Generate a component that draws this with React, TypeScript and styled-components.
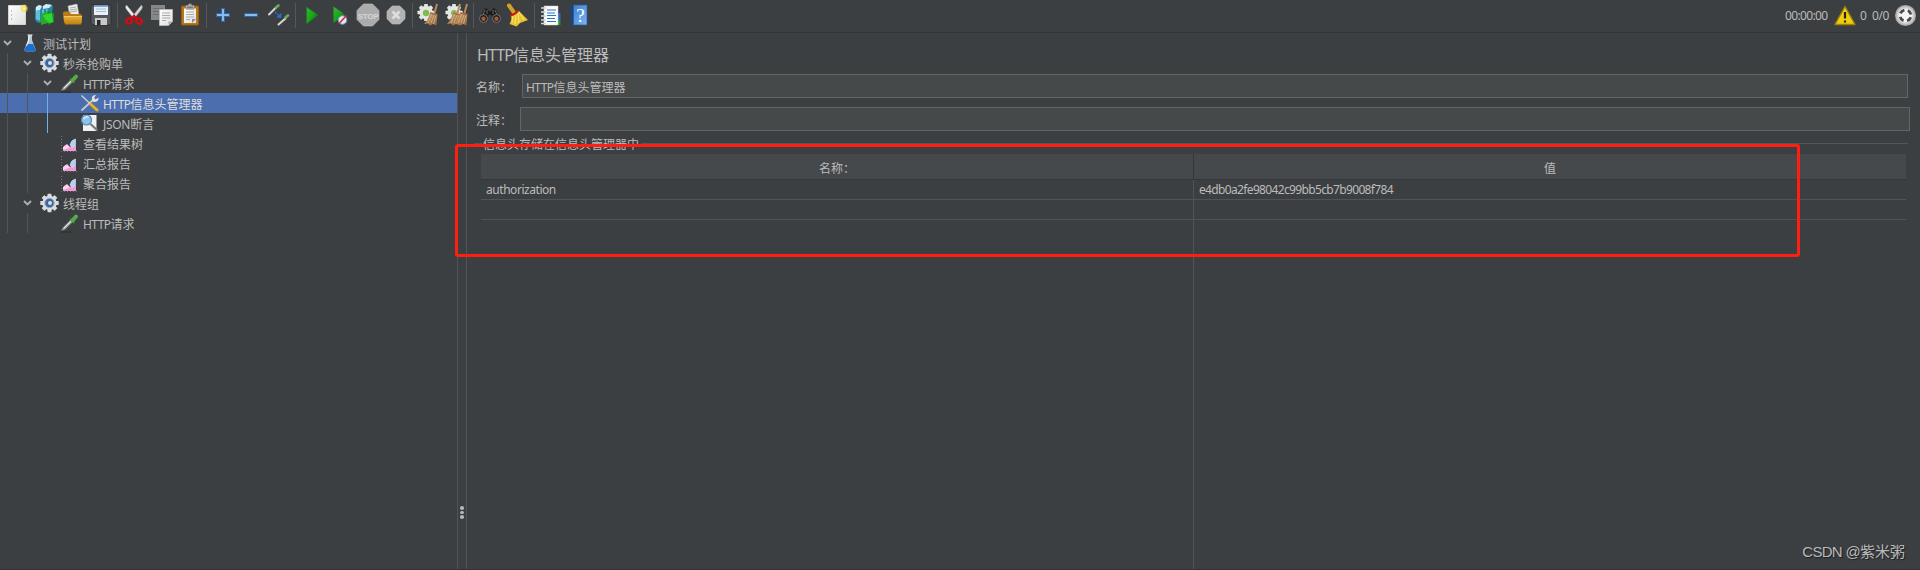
import React from 'react';
import styled, { createGlobalStyle, css } from 'styled-components';

const Global = createGlobalStyle`
  * { box-sizing: border-box; }
  body { margin: 0; background: #3c3f41; overflow: hidden; }
`;

const Window = styled.div`
  position: relative;
  display: flex;
  flex-direction: column;
  width: 1920px;
  height: 570px;
  background: #3c3f41;
  color: #bbbbbb;
  font: 12px/20px "Noto Sans", "Noto Sans CJK SC", sans-serif;
  border-bottom: 1px solid #372f33;
`;

const Latin = styled.span<{ $tight?: number }>`
  letter-spacing: ${(p) => p.$tight ?? -0.55}px;
`;

/* toolbar */
const Toolbar = styled.header`
  display: flex;
  align-items: flex-start;
  flex: none;
  height: 33px;
  padding: 1px 3px 0;
  border-bottom: 1px solid #323436;
`;
const ToolButton = styled.div`
  width: 28px;
  height: 28px;
  padding: 2px;
  svg { display: block; overflow: visible; }
`;
const Separator = styled.div`
  width: 5px;
  height: 25px;
  margin-top: 2px;
  background: linear-gradient(#55585a, #55585a) 2px 0 / 1px 100% no-repeat;
`;
const Status = styled.div`
  display: flex;
  align-items: center;
  height: 28px;
  margin-left: auto;
  padding-top: 1px;
  svg { display: block; }
`;
const Clock = styled.span`
  width: 49px;
  letter-spacing: -0.65px;
`;
const Count = styled.span<{ $w: number }>`
  width: ${(p) => p.$w}px;
  letter-spacing: -0.4px;
`;

/* tree */
const Body = styled.div`
  display: flex;
  flex: 1;
  min-height: 0;
`;
const Tree = styled.nav`
  width: 457px;
  flex: none;
`;
const TreeRow = styled.div<{ $selected?: boolean }>`
  display: flex;
  height: 20px;
  background: ${(p) => (p.$selected ? '#4b6eaf' : 'transparent')};
  color: ${(p) => (p.$selected ? '#dddddd' : '#bbbbbb')};
`;
const Guide = styled.span<{ $active?: boolean }>`
  width: 20px;
  background: linear-gradient(
      ${(p) => (p.$active ? '#6fb1ec, #6fb1ec' : '#525557, #525557')}
    ) 7px 0 / 1px 100% no-repeat;
`;
const Twisty = styled.span`
  width: 20px;
  svg { display: block; }
`;
const NodeIcon = styled.span`
  width: 20px;
  margin-right: 3px;
  svg { display: block; }
`;
const NodeText = styled.span`
  line-height: 23px;
  white-space: nowrap;
`;
const Splitter = styled.div`
  display: flex;
  flex-direction: column;
  align-items: center;
  width: 10px;
  flex: none;
  padding: 473px 0 0 0;
  gap: 1px;
  border: solid #515456;
  border-width: 0 1px;
`;
const Dot = styled.i`
  width: 4px;
  height: 3.5px;
  border-radius: 50%;
  background: #b4b6b7;
`;

/* editor */
const Editor = styled.main`
  display: flex;
  flex-direction: column;
  flex: 1;
  min-width: 0;
  padding: 10px 10px 0 7px;
`;
const Title = styled.h1`
  margin: 0 0 7px 3px;
  height: 24px;
  font-size: 16px;
  font-weight: 400;
  line-height: 25px;
`;
const Field = styled.label<{ $offset: number; $end: number }>`
  display: flex;
  height: 24px;
  margin: 0 ${(p) => p.$end}px 9px 2px;
  line-height: 28px;
  > span { width: ${(p) => p.$offset}px; }
`;
const Input = styled.div`
  flex: 1;
  height: 24px;
  padding-left: 3px;
  border: 1px solid #646665;
  background: #45494a;
  line-height: 25px;
`;
const GroupTitle = styled.div`
  display: flex;
  align-items: center;
  height: 14px;
  margin: -3px 2px 0 0;
  line-height: 14px;
  > span { padding-top: 2px; }
  &::before, &::after {
    content: "";
    height: 1px;
    background: #555658;
    margin-top: -1px;
  }
  &::before { width: 8px; margin-right: 1px; }
  &::after { flex: 1; margin-left: 2px; }
`;
const Table = styled.div`
  display: flex;
  flex-direction: column;
  flex: 1;
  margin: 3px 4px 0 7px;
`;
const cell = css`
  &:first-child { width: 713px; flex: none; border-right: 1px solid #515456; }
  &:last-child { flex: 1; }
`;
const HeadRow = styled.div`
  display: flex;
  height: 26px;
  background: #45494b;
  border-bottom: 1px solid #343739;
`;
const HeadCell = styled.div`
  ${cell}
  text-align: center;
  line-height: 30px;
  &:first-child { border-right-color: #343739; }
`;
const Row = styled.div<{ $fill?: boolean }>`
  display: flex;
  ${(p) => (p.$fill ? 'flex: 1;' : 'height: 20px; border-bottom: 1px solid #515456;')}
`;
const Cell = styled.div`
  ${cell}
  padding-left: 5px;
  line-height: 20px;
`;

/* overlays */
const Highlight = styled.div`
  position: absolute;
  left: 455px;
  top: 144px;
  width: 1345px;
  height: 113px;
  border: 3px solid #ff1e10;
  border-radius: 3px;
`;
const Watermark = styled.div`
  position: absolute;
  right: 15px;
  bottom: 6px;
  font: 15px/22px "Liberation Sans", "Noto Sans CJK SC", sans-serif;
  color: #b9babb;
  text-shadow: 1px 1px 1px #1c1d1e;
  white-space: nowrap;
`;

const Svg = ({ s = 24, children }: { s?: number; children: React.ReactNode }) => (
  <svg width={s} height={s} viewBox={`0 0 ${s} ${s}`} fill="none">{children}</svg>
);

const Gradients = () => (
  <svg width="0" height="0" style={{ position: 'absolute' }}>
    <defs>
      <linearGradient id="green" x1="0" y1="0" x2="1" y2="1"><stop stopColor="#37b437" /><stop offset=".5" stopColor="#19a519" /><stop offset="1" stopColor="#075c07" /></linearGradient>
      <linearGradient id="gold" x1="0" y1="0" x2="0" y2="1"><stop stopColor="#e9ad35" /><stop offset="1" stopColor="#bd7d10" /></linearGradient>
      <linearGradient id="blue" x1="0" y1="0" x2="1" y2="1"><stop stopColor="#3f7fd0" /><stop offset="1" stopColor="#79b5f5" /></linearGradient>
      <linearGradient id="paper" x1="0" y1="0" x2="1" y2="1"><stop stopColor="#ffffff" /><stop offset="1" stopColor="#dedede" /></linearGradient>
      <radialGradient id="sun"><stop stopColor="#fffbd0" /><stop offset=".45" stopColor="#f3df58" /><stop offset="1" stopColor="#f3df58" stopOpacity="0" /></radialGradient>
      <radialGradient id="ball"><stop offset=".55" stopColor="#f5f5f5" /><stop offset="1" stopColor="#a0a0a0" /></radialGradient>
      <linearGradient id="broom" x1="0" y1="0" x2="1" y2="1"><stop stopColor="#d2a675" /><stop offset="1" stopColor="#8f6237" /></linearGradient>
    </defs>
  </svg>
);

const teeth = [0, 45, 90, 135, 180, 225, 270, 315];
const Gear = ({ x, y, r, color }: { x: number; y: number; r: number; color: string }) => (
  <g transform={`translate(${x} ${y})`} fill={color}>
    {teeth.map((a) => <rect key={a} x={-r * 0.22} y={-r} width={r * 0.44} height={r} rx=".6" transform={`rotate(${a})`} />)}
    <circle r={r * 0.78} />
  </g>
);
const Brush = ({ x }: { x: number }) => (
  <g transform={`translate(${x} 0)`}>
    <path d="M19 1 16.500 10" stroke="#b98a5c" strokeWidth="2" />
    <path d="M12 9 19.500 11 18.500 22.500 15 21 12 22.500 10 20.500 6 21Q11 16 12 9Z" fill="url(#broom)" />
    <path d="M14 11 10 20M16 12 13 20M18 12 15.500 21" stroke="#e1bd91" strokeWidth=".7" />
    <path d="m12.500 10 6 2" stroke="#9b4a32" strokeWidth=".8" />
  </g>
);

const tools: Record<string, React.ReactNode> = {
  fresh: <><path d="M3.500 2.500h17v19h-17z" fill="url(#paper)" stroke="#d5d5d0" /><path d="M6 8h.8M6 12h.8M6 16h.8" stroke="#777" /><circle cx="19" cy="5.500" r="4.500" fill="url(#sun)" /></>,
  templates: <>
    <path d="m2 5 3-3 5 1 1 16-6 1L2 17Z" fill="#2a86ab" /><path d="m10 3 7-2 3 2-1 7-8 3Z" fill="#2586a8" />
    <path d="m3 4 3-2 3 1-2 4-4 1Zm7-1 3-2 6 1-3 3-6 1Z" fill="#d5edf2" /><path d="m3 8 4-1v11l-4-2Zm6-1 2-1v5H9Zm4-1 1.500-.5v4H13Z" fill="#65bcda" />
    <path d="m8 11 7-3v12l-7 2Z" fill="#26ac25" /><path d="m15 8 6 2v9l-6 3Z" fill="#139413" /><path d="m10 12 9-2 1 9-4 1-4-4Z" fill="#35d436" />
  </>,
  open: <>
    <path d="m7 3 9-2 2 11-9 2Z" fill="#ededed" stroke="#bbb" strokeWidth=".5" /><path d="m9 5 6-1M9 7l7-1M9 9l7-1" stroke="#999" strokeWidth=".8" />
    <path d="M2 10q0-1.500 1.500-1.500h5L10 11h9q2 0 2 2v7H3Z" fill="#b87c16" /><path d="M2.500 13.500h18.500l-1 8H4Z" fill="url(#gold)" /><path d="M3 13.500h18" stroke="#efc666" />
  </>,
  save: <>
    <path d="M3 2h18l1 1v18q0 1-1 1H4l-2-2V3q0-1 1-1Z" fill="#53585c" stroke="#25292b" strokeWidth=".7" /><path d="M5 2.500h14V12H5z" fill="#e8f2fa" /><path d="M5 3h14" stroke="#6494c6" strokeWidth="1.600" /><path d="M7 6h10M7 8.500h10" stroke="#a9bdc9" />
    <path d="M6 15h12v7H6z" fill="#c9c9c6" /><path d="M8 17h3.500v5H8z" fill="#26292b" />
  </>,
  cut: <>
    <path d="M4.500 2q-2 2.500.5 5l6 7.500 2-2Z" fill="#eee" stroke="#aaa" strokeWidth=".5" /><path d="M19.500 2q2 2.500-.5 5l-6 7.500-2-2Z" fill="#d6d6d6" stroke="#999" strokeWidth=".5" />
    <g stroke="#d50b12" strokeWidth="2.400"><ellipse cx="7" cy="18" rx="3" ry="2.400" transform="rotate(-30 7 18)" /><ellipse cx="17" cy="18" rx="3" ry="2.400" transform="rotate(30 17 18)" /><path d="m9 16 3-3 3 3" /></g>
  </>,
  copy: <>
    <path d="M1 2h14v15H1z" fill="#868888" /><path d="M3 5.500h10M3 8.500h6M3 11.500h6" stroke="#6c6e6f" />
    <path d="M9.500 6.500h13v12l-4 4h-9z" fill="url(#paper)" stroke="#bbb" strokeWidth=".8" /><path d="M12 10h8M12 12.500h8M12 15h8M12 17.500h4" stroke="#aaa" /><path d="M18.500 22v-3.500H22Z" fill="#a8a8a8" />
  </>,
  paste: <>
    <rect x="3.500" y="3" width="17" height="19" rx="1" fill="#b87718" stroke="#955e0e" /><path d="M6 5.500h12V20H6z" fill="url(#paper)" /><path d="M8.500 3h7v3h-7zM10.500 1.500h3" fill="#777" stroke="#a8aaa5" strokeWidth="1.300" />
    <path d="M8 9h8M8 11.500h8M8 14h8M8 16.500h4" stroke="#aaa" /><path d="M14 20v-4h4Z" fill="#8c8c8c" />
  </>,
  add: <><path d="M12 5v14M5 12h14" stroke="#2e65a9" strokeWidth="4" /><path d="M12 6v12M6 12h12" stroke="#8abaf0" strokeWidth="2" /></>,
  remove: <><path d="M5 12h14" stroke="#2e65a9" strokeWidth="4" /><path d="M6 12h12" stroke="#8abaf0" strokeWidth="2" /></>,
  toggle: <>
    <path d="m2 11.500 7-7M11.500 21.500l7-6" stroke="#d5d8d4" strokeWidth="2" strokeLinecap="round" /><path d="m9 4.500 2.500-2M18.500 14.500l2.500-2" stroke="#6fa965" strokeWidth="2.600" strokeLinecap="round" />
    <path d="m8 9 4 3.500" stroke="#2a70db" strokeWidth="1.500" strokeDasharray="2 1" /><path d="m14.500 10-.5 5-5-.5Z" fill="#2a70db" />
  </>,
  play: <path d="M6.500 4 18 12 6.500 21Z" fill="url(#green)" stroke="#118111" strokeWidth=".5" />,
  playNow: <><path d="M5.500 3.500 16.500 11 5.500 20Z" fill="url(#green)" /><circle cx="14.500" cy="17" r="4.300" fill="#dce8f4" stroke="#7197bd" /><path d="m11.500 20 7-7.500" stroke="#d72f2f" strokeWidth="1.600" /></>,
  stop: <><path d="M7.500 1h9L23 7.500v9L16.500 23h-9L1 16.500v-9Z" fill="#acacac" stroke="#c4c4c4" strokeWidth=".6" /><text x="12" y="15.500" fontSize="8" fontWeight="700" fontFamily="Liberation Sans Narrow, Liberation Sans" textAnchor="middle" letterSpacing="-.3" fill="#d6d6d6">STOP</text></>,
  shutdown: <><path d="M8.200 3h7.600L21 8.200v7.600L15.800 21H8.200L3 15.800V8.200Z" fill="#b3b3b3" stroke="#c0c0c0" strokeWidth=".6" /><path d="m8.500 8.500 7 7m0-7-7 7" stroke="#dedede" strokeWidth="2.600" /></>,
  clear: <><Gear x={9} y={9.500} r={8.500} color="#e4e6e3" /><circle cx="9" cy="10" r="3.200" fill="#7dbd52" /><Brush x={1} /></>,
  clearAll: <><Gear x={9} y={9.500} r={8.500} color="#e4e6e3" /><circle cx="9" cy="10" r="3" fill="#7dbd52" /><Brush x={-4} /><Brush x={3} /></>,
  search: <>
    <path d="M6 6q2-2 4 0l1 2h2l1-2q2-2 4 0l4 8-7 3-2-5h-2l-2 5-7-3Z" fill="#1b1b1b" stroke="#444" strokeWidth=".6" /><path d="m7 7-3 7m13-7 3 7M9 7v4m6-4v4" stroke="#6a6a6a" />
    <circle cx="5.500" cy="15.500" r="4" fill="#1c1c1c" stroke="#777" /><circle cx="18.500" cy="15.500" r="4" fill="#1c1c1c" stroke="#777" /><circle cx="5.500" cy="15.800" r="2.200" fill="#a85a38" /><circle cx="18.500" cy="15.800" r="2.200" fill="#a85a38" />
  </>,
  reset: <>
    <path d="m3 2.500 5 7" stroke="#d5a324" strokeWidth="4" strokeLinecap="round" /><path d="m12.500 7.500 9.500 9.500-8 3-3.500 3.500L3.500 21Q6 17 5 12.500Z" fill="#e7c32f" />
    <path d="m7 13-1 7m4-8-1 9m3-11 1 10m0-11 5 8" stroke="#fae773" /><path d="M4 12.500Q9.500 11.500 12.500 7" stroke="#c21b17" strokeWidth="2.200" />
  </>,
  list: <>
    <path d="M17 10h4.500v7H17z" fill="#2c68c0" /><path d="M17 17h4.500v5H17z" fill="#29933a" /><path d="M5 3h14v19H5z" fill="#fbfbfb" stroke="#ccc" strokeWidth=".5" /><path d="M8 7h9M8 10h8M8 12.500h9M8 15.500h8M8 18.500h9" stroke="#2675c6" />
    <path d="M2 5h5M2 9h5M2 13h5M2 17h5M2 20.500h5" stroke="#d5d5d5" strokeWidth="1.700" />
  </>,
  help: <><path d="M3.500 2h4v20h-4z" fill="#1f4379" /><path d="M6.500 2h13.500v20H6.500z" fill="url(#blue)" stroke="#2b5696" strokeWidth=".7" /><text x="13.500" y="18.500" fontSize="19" fontFamily="Liberation Serif" textAnchor="middle" fill="#fff">?</text></>,
};

const groups = [
  ['fresh', 'templates', 'open', 'save'], ['cut', 'copy', 'paste'], ['add', 'remove', 'toggle'],
  ['play', 'playNow', 'stop', 'shutdown'], ['clear', 'clearAll'], ['search', 'reset'], ['list', 'help'],
];

const nodeIcons: Record<string, React.ReactNode> = {
  flask: <><path d="M8 2h4v5l3.500 9q.5 2.500-2 2.500h-7Q4 18.500 4.500 16L8 7Z" fill="#b3c6d6" /><path d="M7 11h6l2.500 5.500q0 2-2 2h-7q-2 0-2-2Z" fill="#1b6fce" /><path d="M7.500 2h5" stroke="#eee" /><path d="m9 3-.5 5-2 5" stroke="#fff" /></>,
  gear: <><Gear x={9.500} y={10} r={9.200} color="#d9dde1" /><circle cx="9.500" cy="10" r="4.600" fill="#3f6598" stroke="#8ba4c1" /><circle cx="10" cy="10" r="2" fill="#d4dfea" /></>,
  dropper: <><path d="M1 19h10" stroke="#292b2c" /><path d="m1.500 17.500 1.500-3 8-8 2 2-8 8Z" fill="#a9ada9" stroke="#777b77" strokeWidth=".5" /><path d="m4 15 7-7" stroke="#eee" /><path d="m10 5.500 4.500 4.500" stroke="#397b35" strokeWidth="1.800" /><path d="m12.500 7.500 3.500-4" stroke="#57a949" strokeWidth="4" strokeLinecap="round" /></>,
  wrench: <>
    <path d="m2 17 12-11" stroke="#c4c9c6" strokeWidth="1.800" strokeLinecap="round" /><path d="M12 7q-1-5 4-5l-2 3 1.500 1.500 3-2q.5 4.500-5 4.500Z" fill="#e1e3e1" />
    <path d="m1.500 2.500 10 9.500" stroke="#d2d2cd" strokeWidth="1.300" /><path d="m11 11.500 6 5.500" stroke="#eeb01d" strokeWidth="3" strokeLinecap="round" />
  </>,
  lens: <><path d="M3 2h13.500v16H3z" fill="#f1f1f1" /><path d="m10.500 11 7 6.500" stroke="#77797a" strokeWidth="2.200" /><circle cx="6.500" cy="7" r="5" fill="#8dc3ea" stroke="#5688b0" strokeWidth="1.200" /><path d="M3.500 6q2-3 5-2" stroke="#d9eefb" strokeWidth="1.500" /></>,
  chart: <><path d="M1.500 3v15.500H17" stroke="#777" strokeDasharray="1 2" /><path d="m3 18 1-5 3-2 3 3 3-3 3 1v6Z" fill="#ef9ad6" /><path d="m3 14 4-2.500 3 3-7 2.500Z" fill="#fbd5f0" /><path d="M10 12q1-5 5.500-6v5.500l-3 3Z" fill="#a9d2f4" stroke="#dceefa" strokeWidth=".6" /></>,
};

type Node = { icon: string; depth: number; label: React.ReactNode; open?: boolean; selected?: boolean };
const http = <Latin>HTTP</Latin>;
const nodes: Node[] = [
  { icon: 'flask', depth: 0, label: '测试计划', open: true },
  { icon: 'gear', depth: 1, label: '秒杀抢购单', open: true },
  { icon: 'dropper', depth: 2, label: <>{http}请求</>, open: true },
  { icon: 'wrench', depth: 3, label: <>{http}信息头管理器</>, selected: true },
  { icon: 'lens', depth: 3, label: <><Latin $tight={-0.3}>JSON</Latin>断言</> },
  { icon: 'chart', depth: 2, label: '查看结果树' },
  { icon: 'chart', depth: 2, label: '汇总报告' },
  { icon: 'chart', depth: 2, label: '聚合报告' },
  { icon: 'gear', depth: 1, label: '线程组', open: true },
  { icon: 'dropper', depth: 2, label: <>{http}请求</> },
];

export default function App() {
  return (
    <Window>
      <Global />
      <Gradients />
      <Toolbar>
        {groups.map((g, i) => (
          <React.Fragment key={i}>
            {i > 0 && <Separator />}
            {g.map((n) => <ToolButton key={n}><Svg>{tools[n]}</Svg></ToolButton>)}
          </React.Fragment>
        ))}
        <Status>
          <Clock>00:00:00</Clock>
          <Count $w={26}>
            <svg width="22" height="21" viewBox="0 0 22 21"><path d="M11 1.500 21 19.500H1Z" fill="#f2cd0c" stroke="#9c8309" strokeWidth="1.400" strokeLinejoin="round" /><path d="M11 7v6.500M11 15.500v2" stroke="#222" strokeWidth="2.200" /></svg>
          </Count>
          <Count $w={12}>0</Count>
          <Count $w={22}>0/0</Count>
          <svg width="23" height="23" viewBox="0 0 23 23" fill="none">
            <circle cx="11.500" cy="11.500" r="10.500" fill="url(#ball)" />
            <circle cx="11.500" cy="11.500" r="5.500" stroke="#4b4b4b" strokeWidth="2.800" strokeDasharray="5 3.640" strokeDashoffset="-1.800" />
          </svg>
        </Status>
      </Toolbar>
      <Body>
        <Tree>
          {nodes.map((n, i) => (
            <TreeRow key={i} $selected={n.selected}>
              {Array.from({ length: n.depth }, (_, d) => <Guide key={d} $active={d === 2} />)}
              <Twisty>{n.open && <Svg s={20}><path d="m4 8 3.500 3.500L11 8" stroke="#adb0b2" strokeWidth="1.900" /></Svg>}</Twisty>
              <NodeIcon><Svg s={20}>{nodeIcons[n.icon]}</Svg></NodeIcon>
              <NodeText>{n.label}</NodeText>
            </TreeRow>
          ))}
        </Tree>
        <Splitter><Dot /><Dot /><Dot /></Splitter>
        <Editor>
          <Title><Latin $tight={-0.9}>HTTP</Latin>信息头管理器</Title>
          <Field $offset={46} $end={2}><span>名称：</span><Input>{http}信息头管理器</Input></Field>
          <Field $offset={44} $end={0}><span>注释：</span><Input /></Field>
          <GroupTitle><span>信息头存储在信息头管理器中</span></GroupTitle>
          <Table>
            <HeadRow><HeadCell>名称：</HeadCell><HeadCell>值</HeadCell></HeadRow>
            <Row>
              <Cell><Latin $tight={-0.45}>authorization</Latin></Cell>
              <Cell><Latin $tight={-0.65}>e4db0a2fe98042c99bb5cb7b9008f784</Latin></Cell>
            </Row>
            <Row><Cell /><Cell /></Row>
            <Row $fill><Cell /><Cell /></Row>
          </Table>
        </Editor>
      </Body>
      <Highlight />
      <Watermark><Latin $tight={-0.7}>CSDN @</Latin>紫米粥</Watermark>
    </Window>
  );
}
